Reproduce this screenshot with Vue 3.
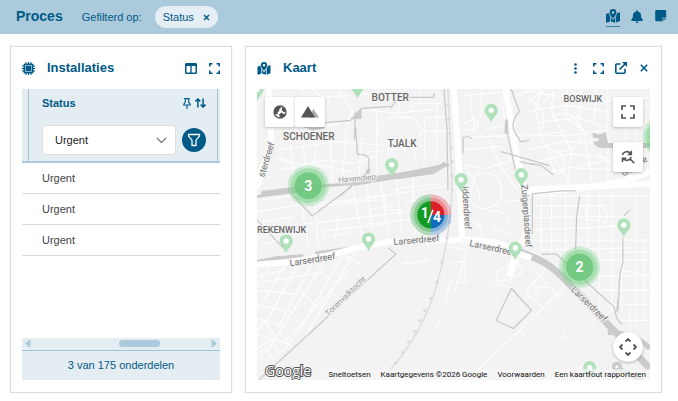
<script setup>
import { ref } from 'vue'

const status = ref('Urgent')
const rows = ['Urgent', 'Urgent', 'Urgent']

// Light residential streets
const streets = [
  // north-west
  'M272 130l18-4 22 4 26-6M278 150l60-8 48 4M276 158l26 8 24-6 26 4 24-8M280 170l40-4 30 6M290 145l4 38M302 146l6 30M316 145l-4 36M330 140l2 42M346 132l-4 46M362 138l-4 40M376 110v64M264 200l40-6M330 96l-8 28M338 92l14 20-6 14M300 90l6 8M312 90l10 8 26-2',
  'M352 92l20 4 16-2M360 108l30 6 44-4M376 128l14-10h22l10 12-8 14-22 2-12-8zM388 146v16M404 118l10-14h26M412 146l4 18M424 118h20M424 132h22M424 118v40M436 104v54M370 152l36-3M398 92v26M420 92v14',
  // centre
  'M464 96l36-3M470 100c-3 14 6 22 3 34M480 92v26M463 124q14-8 14 0t-14 6M484 130l18-4M500 98l4 24M462 138l48-2 52-3M462 150l38-3 10 14-26 8-20-4M488 140l12 28 16 22M466 170q14 20 12 30M474 176q22-8 26 10t-14 22-16-16zM466 218q18 8 14 18M488 212q18-4 20 14M504 202l18-2M490 228l18 6',
  // west
  'M257 212l48-8 50-4 90-14M262 222l30-5M300 194l8 54M314 192l4 56M306 224l52-6 76-10M318 206l60-6M324 237l26-4-2-6-26 4zM338 216l-4 22M352 186l10 54M366 184l6 46M380 182l8 54M396 178l5 56M412 174l2 60M370 196h14l2 14h16M392 190l22-4M364 210l30-4M366 224l42-4M330 230l60-6M404 188l34-4M404 202l30-3M262 245l24-8',
  'M257 276l28-6M262 282l60-10M270 266l-13 20M284 266l-20 34-7 8M298 264l-30 54-11 12M312 262l-34 66M326 259l-58 90-10 8M341 256l-38 68-18 24M354 252l-50 86M257 290l40 4M257 304l36 8M257 318l32 10M257 334l30 8M264 320l14 20 12 4-18 14-6-10-8 4M257 348l20-12M272 340l8 14M300 290l18 18M322 274l20 12M286 340l62-70M362 265l-18-10',
  // east
  'M528 92l34 6 16-4 24 8 46-4M540 90l-6 22 8 32 26 38M552 90l-2 22 20 40-4 30M566 90l-2 28 18 14 8 48M580 90l-3 34 14 20M594 90l-2 34M606 90v92M526 112l38-6 42 6M532 124l44-6 30 10M530 136l38 0 40-6M528 150l34-8 40 2M530 164l38-10 36 4M536 176l30-8 44 2M528 100q20 14 12 30M514 96l22-6M610 106h38M620 128h28M624 128v50M634 120v60M548 120q18-14 28 4t-8 26-24-8',
  'M520 96l14-10M524 105l18-14M532 112l20-18M548 158q10-10 14 2t-8 14zM590 150l22 16M580 166l30-6',
  'M532 196h116M534 206h72M534 218l90-2M534 230l84-4M532 240h116M540 250l88-2M560 260h88M582 276h66M590 290h58M540 192v58M550 192v64M564 192v72M586 192v84M598 192v110M610 192v120M620 240v70M634 192v136M642 240v80M596 206q16 6 6 18M570 206l14 0v14h14M618 270l30 6M612 252h36M610 304h38M620 320h28M628 304v30',
  'M446 246q16 6 24 0M452 262h12v20h-8M402 264l26-4M410 268v-8M450 280l-6 20M466 250l-12 40M494 272l22-10 6 10-24 10zM490 282l22 6M520 250l-12 34M474 372l88-84M532 300l10 8M532 296l8-10M516 330l10 6M528 284l22 4M536 278l-12 14 8 8M570 376q16-20 26-12M604 376l10-14M560 340l4-8M434 328l6-10M530 268l30 30M544 268l-8 12',
]

// Broad white through-roads
const avenues = [
  'M269 89L271 138Q270 152 264 164L257 188',
  'M453 89L458 168L461 238',
  'M504 89L516 158L521 185L526 214Q527 238 514 250',
  'M526 192Q606 190 648 172',
  'M257 264Q304 262 340 252T402 241T464 240T514 252L530 258',
  'M526 190L648 184M514 254L508 276',
]

// Grey footpaths, canals and outlines
const paths = [
  'M296 126L350 121L361 109L390 107M390 109L398 98H433V94M355 127L357 155Q371 154 368 164V170L364 176M354 140L355 112',
  'M443 90L446 130L447 190M462 154V138L468 137M468 138L471 139M510 90L518 112Q506 126 517 138L519 142L528 141M506 134L514 170M518 162L532 165M530 164L540 166L552 175',
  'M290 193L312 216L352 186M340 196L352 185M257 220L285 250M257 261L280 256M500 152L548 166M462 190L466 230M520 190L524 230',
  'M530 194L560 191H574M578 196L575 216L574 250M531 194V234M622 216L628 210M621 238V262L618 274L616 310M540 254L555 254L596 292M596 292L612 306L615 318L620 324M616 300L615 312M388 248L395 254L258 380',
  'M510 288L495 320L512 328L530 310L510 288',
]

const pins = [
  [391, 165], [490, 111], [460, 180], [520, 175], [286, 241], [368, 239],
  [514, 248], [622, 225], [357, 87], [588, 367], [257, 90],
]

const clusters = [
  { x: 308, y: 186, n: '3' },
  { x: 578, y: 267, n: '2' },
  { x: 661, y: 137, n: '' },
]

const railTicks = [
  [447, 106], [448, 120], [449, 134], [450, 148], [451, 162], [451, 176], [451, 190],
  [450, 206], [449, 222], [446, 238], [441, 262], [436, 282], [430, 298], [424, 310],
  [419, 320], [414, 331], [408, 341], [402, 352], [395, 362],
]
</script>

<template>
  <div class="page">
    <header class="topbar">
      <h1>Proces</h1>
      <span class="filter-label">Gefilterd op:</span>
      <span class="chip">
        Status
        <button type="button" aria-label="Filter verwijderen">
          <svg width="7" height="7" viewBox="0 0 7 7"><path d="M1 1l5 5M6 1l-5 5" stroke="currentColor" stroke-width="1.4" /></svg>
        </button>
      </span>
      <nav class="top-actions">
        <button type="button" class="active" aria-label="Kaart">
          <svg width="14" height="14" viewBox="0 0 14 14" fill="currentColor">
            <path d="M0 5.600Q0 5 .6 4.800L3 3.900Q3.300 6 4.200 7.200V12.400L.7 13.700Q0 13.900 0 13.200zM5 8.300L7 11 9 8.300V13.800L5 12.500zM9.800 7.200Q10.800 5.600 10.900 4.300L13.300 3.400Q14 3.200 14 3.900V11.600Q14 12.100 13.400 12.300L9.800 13.600z" />
            <path fill-rule="evenodd" d="M7 0a3.400 3.400 0 0 1 3.400 3.400C10.400 5.200 8.300 8 7 9.500 5.700 8 3.600 5.200 3.600 3.400A3.400 3.400 0 0 1 7 0zM7 2.200a1.300 1.300 0 1 0 0 2.600 1.300 1.300 0 0 0 0-2.600z" />
          </svg>
        </button>
        <button type="button" aria-label="Meldingen">
          <svg width="12" height="13" viewBox="0 0 12 13" fill="currentColor">
            <path d="M5.200 1a.8.8 0 0 1 1.600 0v.5C8.800 1.900 10 3.500 10 5.300c0 2.200.5 3 1.500 4.200.6.700.200 1.400-.5 1.400H1c-.7 0-1.100-.7-.5-1.400C1.500 8.300 2 7.500 2 5.300c0-1.800 1.200-3.400 3.200-3.800zM4.500 11.500h3a1.500 1.500 0 0 1-3 0z" />
          </svg>
        </button>
        <button type="button" aria-label="Notities">
          <svg width="12" height="12" viewBox="0 0 12 12">
            <path fill="currentColor" d="M1.500 0h8.500a1.200 1.200 0 0 1 1.200 1.200V7.500H8.300a.8.8 0 0 0-.8.8v3H1.500A1.300 1.300 0 0 1 .2 10V1.300A1.300 1.300 0 0 1 1.500 0zM8.300 11.100V8.300h2.800z" />
          </svg>
        </button>
      </nav>
    </header>

    <main class="panels">
      <section class="panel">
        <div class="panel-head">
          <svg class="lead" width="13" height="13" viewBox="0 0 13 13">
            <path d="M4 0v13M6.500 0v13M9 0v13M0 4h13M0 6.500h13M0 9h13" stroke="currentColor" stroke-width="1" />
            <rect x="1.500" y="1.500" width="10" height="10" rx="1.500" fill="currentColor" />
            <rect x="3.500" y="3.500" width="6" height="6" fill="none" stroke="#abcbdc" stroke-width=".8" />
          </svg>
          <h2>Installaties</h2>
          <div class="tools">
            <button type="button" aria-label="Kolommen">
              <svg width="12" height="11" viewBox="0 0 12 11"><path fill="currentColor" fill-rule="evenodd" d="M1.300 0h9.400A1.300 1.300 0 0 1 12 1.300v8.400A1.300 1.300 0 0 1 10.700 11H1.300A1.300 1.300 0 0 1 0 9.700V1.300A1.300 1.300 0 0 1 1.300 0zM1.500 3v6.500h3.800V3zM6.700 3v6.500h3.800V3z" /></svg>
            </button>
            <button type="button" aria-label="Volledig scherm">
              <svg width="11" height="11" viewBox="0 0 11 11"><path d="M.8 3.500V.8h2.700M7.500.8h2.700v2.700M10.200 7.500v2.700H7.500M3.500 10.200H.8V7.500" fill="none" stroke="currentColor" stroke-width="1.600" /></svg>
            </button>
          </div>
        </div>

        <div class="grid-area">
          <table>
            <thead>
              <tr>
                <th scope="col">
                  <div class="col-head">
                    <div class="col-title">
                      <span>Status</span>
                      <button type="button" aria-label="Kolom vastzetten">
                        <svg width="8" height="11" viewBox="0 0 8 11"><path d="M1.200.6h5.600M2.300.8v3.400L.8 6.200v.8h6.400v-.8L5.700 4.200V.8M4 7v4" fill="none" stroke="currentColor" stroke-width="1.100" /></svg>
                      </button>
                      <button type="button" aria-label="Sorteren">
                        <svg width="11" height="10" viewBox="0 0 11 10"><path d="M2.900 9.500V1M.5 3.400L2.900 1l2.400 2.400M8.100.5V9M5.700 6.600L8.100 9l2.400-2.400" fill="none" stroke="currentColor" stroke-width="1.500" /></svg>
                      </button>
                    </div>
                    <div class="col-filter">
                      <div class="select-box">
                        <select v-model="status" aria-label="Status filteren">
                          <option>Urgent</option>
                        </select>
                        <svg width="11" height="7" viewBox="0 0 11 7"><path d="M.8.8l4.700 4.700L10.200.8" fill="none" stroke="#6b6b6b" stroke-width="1.200" /></svg>
                      </div>
                      <button type="button" class="funnel" aria-label="Filter">
                        <svg width="14" height="14" viewBox="0 0 14 14"><path d="M1.500 1.500h11v1.600L9 7.200v5.300H5V7.200L1.500 3.100z" fill="none" stroke="#fff" stroke-width="1.300" /></svg>
                      </button>
                    </div>
                  </div>
                </th>
              </tr>
            </thead>
            <tbody>
              <tr v-for="(row, i) in rows" :key="i"><td>{{ row }}</td></tr>
            </tbody>
          </table>
        </div>
        <div class="scrollbar">
          <svg width="6" height="7" viewBox="0 0 6 7"><path d="M5.500 0v7H4L0 3.500 4 0z" fill="#abcbdc" /></svg>
          <span class="track"><span class="thumb"></span></span>
          <svg width="6" height="7" viewBox="0 0 6 7"><path d="M.5 0v7H2l4-3.500L2 0z" fill="#abcbdc" /></svg>
        </div>
        <div class="count">3 van 175 onderdelen</div>
      </section>

      <section class="panel">
        <div class="panel-head">
          <svg class="lead" width="14" height="13" viewBox="0 0 14 14" fill="currentColor">
            <path d="M0 5.600Q0 5 .6 4.800L3 3.900Q3.300 6 4.200 7.200V12.400L.7 13.700Q0 13.900 0 13.200zM5 8.300L7 11 9 8.300V13.800L5 12.500zM9.800 7.200Q10.800 5.600 10.900 4.300L13.300 3.400Q14 3.200 14 3.900V11.600Q14 12.100 13.400 12.300L9.800 13.600z" />
            <path fill-rule="evenodd" d="M7 0a3.400 3.400 0 0 1 3.400 3.400C10.400 5.200 8.300 8 7 9.500 5.700 8 3.600 5.200 3.600 3.400A3.400 3.400 0 0 1 7 0zM7 2.200a1.300 1.300 0 1 0 0 2.600 1.300 1.300 0 0 0 0-2.600z" />
          </svg>
          <h2>Kaart</h2>
          <div class="tools">
            <button type="button" aria-label="Meer">
              <svg width="3" height="11" viewBox="0 0 3 11" fill="currentColor"><circle cx="1.500" cy="1.500" r="1.300" /><circle cx="1.500" cy="5.500" r="1.300" /><circle cx="1.500" cy="9.500" r="1.300" /></svg>
            </button>
            <button type="button" aria-label="Volledig scherm">
              <svg width="11" height="11" viewBox="0 0 11 11"><path d="M.8 3.500V.8h2.700M7.500.8h2.700v2.700M10.200 7.500v2.700H7.500M3.500 10.200H.8V7.500" fill="none" stroke="currentColor" stroke-width="1.600" /></svg>
            </button>
            <button type="button" aria-label="Openen in nieuw venster">
              <svg width="12" height="12" viewBox="0 0 12 12"><path d="M5.500 2H1.800a1 1 0 0 0-1 1v7.200a1 1 0 0 0 1 1H9a1 1 0 0 0 1-1V6.800M4.500 7.500L10 2" fill="none" stroke="currentColor" stroke-width="1.600" /><path d="M7 0h5v5z" fill="currentColor" /></svg>
            </button>
            <button type="button" aria-label="Sluiten">
              <svg width="8" height="8" viewBox="0 0 8 8"><path d="M.8.8l6.400 6.400M7.200.8L.8 7.200" stroke="currentColor" stroke-width="1.600" /></svg>
            </button>
          </div>
        </div>

        <div class="map">
          <svg class="canvas" viewBox="257 89 391 291" preserveAspectRatio="xMidYMid slice">
            <rect x="257" y="89" width="391" height="292" fill="#f3f3f3" />
            <g fill="none" stroke="#fdfdfd" stroke-width="1.200"><path v-for="d in streets" :key="d" :d="d" /></g>

            <g fill="none" stroke="#cbcbcb">
              <path d="M257 197L300 188L350 184L448 165" stroke-width="3" />
              <path d="M264 194L304 189M354 183L396 176" stroke-width="6" stroke-linecap="round" />
              <path d="M396 177L432 172L445 164" stroke-width="5" />
              <path d="M257 262L290 257L303 256" stroke-width="4" />
              <path d="M315 253L350 248L358 246M388 244L392 243" stroke-width="3" />
              <path d="M514 250L534 258Q552 266 566 282L612 330L648 368" stroke-width="7" />
              <path d="M606 332Q632 332 648 348" stroke-width="5" />
              <path d="M600 146H648" stroke-width="5" />
              <path d="M614 366L648 384" stroke-width="4" />
            </g>
            <path d="M591 133l6 2 7-2 2 9v6h-10l-5-5 6-2v-2l-6-1zM352 120l9-12v11zM302 127l14 1 8-2v3l-12 2zM504 120l3 0v14h-4z" fill="#cbcbcb" />
            <circle cx="615" cy="366" r="5" fill="#cbcbcb" /><circle cx="615" cy="366" r="1.500" fill="#fff" />
            <path d="M366 170l4-1-1 5-5 2z" fill="#cbcbcb" />

            <g fill="none" stroke="#fff" stroke-width="6" stroke-linejoin="round"><path v-for="d in avenues" :key="d" :d="d" /></g>
            <circle cx="464" cy="241" r="4" fill="#fafafa" />
            <g fill="none" stroke="#c7c7c7" stroke-width="1.200" stroke-linejoin="round"><path v-for="d in paths" :key="d" :d="d" /></g>
            <path d="M447 89L451 185Q450 235 436 284T388 371" fill="none" stroke="#dcdcdc" stroke-width="1.400" />
            <circle v-for="([x, y], i) in railTicks" :key="'r' + i" :cx="x" :cy="y" r="1.600" fill="#dadada" />

            <g class="area">
              <text x="371" y="102">BOTTER</text>
              <text x="283" y="140">SCHOENER</text>
              <text x="387" y="147">TJALK</text>
              <text class="small" x="562" y="103">BOSWIJK</text>
              <text class="small" x="257" y="233">REKENWIJK</text>
            </g>
            <g class="road">
              <text transform="translate(264 178) rotate(-73)">sterdreef</text>
              <text class="faint" transform="translate(338 183) rotate(-5)">Havendiep</text>
              <text transform="translate(290 266) rotate(-9)">Larserdreef</text>
              <text transform="translate(393 245) rotate(-5)">Larserdreef</text>
              <text transform="translate(468 246) rotate(12)">Larserdreef</text>
              <text transform="translate(461 187) rotate(86)">iddendreef</text>
              <text transform="translate(520 185) rotate(86)">Zuigerplasdreef</text>
              <text transform="translate(569 290) rotate(44)">Larserdreef</text>
              <text transform="translate(622 177) rotate(-32)">Ge</text>
              <text transform="translate(638 166) rotate(-32)">se</text>
              <text class="faint" transform="translate(328 316) rotate(-44)">Torenvalktocht</text>
            </g>

            <g v-for="([x, y], i) in pins" :key="'p' + i" :transform="`translate(${x} ${y})`">
              <path d="M0 12.500C-1 8-6.600 4.500-6.600 0A6.600 6.600 0 0 1 6.600 0C6.600 4.500 1 8 0 12.500z" fill="#afe2ba" />
              <circle r="2.700" fill="#fff" />
            </g>

            <g v-for="(c, i) in clusters" :key="'c' + i" :transform="`translate(${c.x} ${c.y})`">
              <circle r="20.500" fill="#6fcf80" fill-opacity=".3" />
              <circle r="17.500" fill="#6fcf80" fill-opacity=".4" />
              <circle r="13.500" fill="#6bc67b" fill-opacity=".85" />
              <text v-if="c.n" class="num" text-anchor="middle" y="5">{{ c.n }}</text>
            </g>

            <g transform="translate(430 215)">
              <g fill-opacity=".28">
                <path d="M0-20.500A20.500 20.500 0 0 0 0 20.500z" fill="#109c22" />
                <path d="M0-17A17 17 0 0 0 0 17z" fill="#109c22" />
                <path d="M0-20.500A20.500 20.500 0 0 1 20.500 0H0z" fill="#e0202a" />
                <path d="M0-17A17 17 0 0 1 17 0H0z" fill="#e0202a" />
                <path d="M20.500 0A20.500 20.500 0 0 1 0 20.500V0z" fill="#0f6dbd" />
                <path d="M17 0A17 17 0 0 1 0 17V0z" fill="#0f6dbd" />
              </g>
              <path d="M0-13.500A13.500 13.500 0 0 0 0 13.500z" fill="#109c22" />
              <path d="M0-13.500A13.500 13.500 0 0 1 13.500 0H0z" fill="#dc1f26" />
              <path d="M13.500 0A13.500 13.500 0 0 1 0 13.500V0z" fill="#0f6dbd" />
              <text class="num" x="-10" y="3">1</text>
              <path d="M-3 8L2-5" stroke="#fff" stroke-width="1.500" />
              <text class="num" x="2" y="7">4</text>
            </g>
            <text class="google" x="265" y="375">Google</text>
          </svg>

          <div class="map-types">
            <button type="button" aria-label="Satelliet">
              <svg width="14" height="14" viewBox="0 0 14 14"><circle cx="7" cy="7" r="6" fill="#fff" stroke="#555" stroke-width="1.300" /><path d="M1 8Q.8 4 4 1.800L7.500 1.300 8 3 6 4.500 6.500 6 4.500 7 5 9 3 9.500zM9.500 2l2.500 2 .8 3-2 .2L8.500 5zM6 9.500L8.500 7.500l2 1.500 2-.5-1.500 3L8.500 12.500 6.500 11.500z" fill="#555" /></svg>
            </button>
            <button type="button" aria-label="Terrein">
              <svg width="18" height="12" viewBox="0 0 18 12"><path d="M8 11.500l4.500-8.500L18 11.500z" fill="#aaa" /><path d="M0 11.500L7 0l7 11.500z" fill="#555" /></svg>
            </button>
          </div>
          <div class="map-side">
            <button type="button" aria-label="Kaart op volledig scherm">
              <svg width="14" height="14" viewBox="0 0 14 14"><path d="M1 5V1h4M9 1h4v4M13 9v4H9M5 13H1V9" fill="none" stroke="#555" stroke-width="1.700" /></svg>
            </button>
            <button type="button" aria-label="Opnieuw zoeken">
              <svg width="14" height="14" viewBox="0 0 14 14" fill="none" stroke="#555" stroke-width="1.600"><path d="M1.500 5A4.500 4.500 0 0 1 9.700 3.800M10.300.8v3.700H6.700M10.200 7A4.500 4.500 0 0 1 2.300 8.600M1.500 12V8.300h3.700M9 8.800l4.300 4.400" /></svg>
            </button>
          </div>
          <button type="button" class="pan" aria-label="Kaart verschuiven">
            <svg width="18" height="18" viewBox="0 0 18 18"><path d="M6.500 3.500L9 1l2.500 2.500M14.500 6.500L17 9l-2.500 2.500M11.500 14.500L9 17l-2.500-2.500M3.500 11.500L1 9l2.500-2.500" fill="none" stroke="#555" stroke-width="1.800" /></svg>
          </button>
          <div class="credits">
            <a href="#">Sneltoetsen</a>
            <span>Kaartgegevens ©2026 Google</span>
            <a href="#">Voorwaarden</a>
            <a href="#">Een kaartfout rapporteren</a>
          </div>
        </div>
      </section>
    </main>
  </div>
</template>

<style>
body { margin: 0; background: #fff; }
</style>

<style scoped>
* { box-sizing: border-box; }
.page {
  min-height: 100vh;
  display: flex;
  flex-direction: column;
  font: 11px/16px "Liberation Sans", Arial, sans-serif;
  color: #005a87;
}
button {
  display: flex;
  align-items: center;
  justify-content: center;
  padding: 0;
  border: 0;
  background: none;
  color: inherit;
  font: inherit;
  cursor: pointer;
}
svg { display: block; flex: none; }
.topbar {
  display: flex;
  align-items: center;
  height: 34px;
  padding: 0 10px 2px 16px;
  background: #abcadb;
}
h1 { margin: 0 19px 0 0; font-size: 14px; line-height: 20px; }
.filter-label { margin-right: 13px; padding-top: 2px; }
.chip {
  display: flex;
  align-items: center;
  gap: 9px;
  height: 22px;
  margin-top: 2px;
  padding: 0 8px;
  border-radius: 11px;
  background: #e4eef4;
}
.top-actions { display: flex; gap: 10px; margin-left: auto; }
.top-actions button {
  width: 14px;
  height: 20px;
  margin-top: 2px;
  padding-bottom: 1px;
  border-bottom: 1px solid transparent;
}
.top-actions .active { border-color: #3a7fa3; }
.panels {
  flex: 1;
  display: grid;
  grid-template-columns: minmax(0, 222fr) minmax(0, 417fr);
  gap: 13px;
  padding: 12px 16px 8px 10px;
}
.panel {
  display: flex;
  flex-direction: column;
  padding: 0 11px 12px;
  border: 1px solid #dedede;
  box-shadow: 0 0 1px #ddd;
}
.panel-head { display: flex; align-items: center; height: 42px; }
.lead { margin-right: 12px; }
h2 { margin: 0; font-size: 13px; line-height: 18px; }
.tools { display: flex; align-items: center; gap: 11px; margin-left: auto; }
.tools button { width: 12px; }
.grid-area { flex: 1; }
table { width: 100%; border-collapse: collapse; }
th {
  padding: 0 2px 0 6px;
  background: #e4edf2;
  border-bottom: 2px solid #abcadb;
  text-align: left;
}
.col-head {
  height: 72px;
  padding: 6px 11px 0 13px;
  border-left: 1px solid #a3c4d6;
  border-right: 1px solid #a3c4d6;
}
.col-title { display: flex; align-items: center; gap: 4px; margin-bottom: 14px; }
.col-title span { flex: 1; }
.col-filter { display: flex; align-items: center; gap: 6px; }
.select-box { position: relative; flex: 1; min-width: 0; }
.select-box svg { position: absolute; right: 9px; top: 12px; pointer-events: none; }
select {
  display: block;
  width: 100%;
  height: 30px;
  padding: 0 24px 0 12px;
  appearance: none;
  border: 1px solid #ddd;
  border-radius: 2px;
  background: #fff;
  color: #222;
  font: inherit;
  font-weight: 400;
}
.funnel { width: 24px; height: 24px; border-radius: 50%; background: #005a87; }
td { height: 31px; padding: 0 20px; border-bottom: 1px solid #d9d9d9; color: #444; }
.scrollbar {
  display: flex;
  align-items: center;
  height: 13px;
  padding: 0 3px 1px;
  background: #e4edf2;
  border-bottom: 1px solid #9fc3d6;
}
.track { flex: 1; height: 7px; padding-left: 46%; }
.thumb { display: block; width: 41px; height: 7px; border-radius: 4px; background: #abcadb; }
.count { height: 29px; line-height: 29px; text-align: center; background: #e4edf2; }
.map { position: relative; flex: 1; min-height: 240px; overflow: hidden; background: #f3f3f3; }
.canvas { position: absolute; inset: 0; width: 100%; height: 100%; font-family: Roboto, sans-serif; }
.area text { font-size: 10px; font-weight: 500; fill: #686868; stroke: #f5f5f5; stroke-width: 2px; paint-order: stroke; }
.area .small { font-size: 9px; }
.road text { font-size: 9px; fill: #707070; stroke: #f5f5f5; stroke-width: 2px; paint-order: stroke; }
.road .faint { font-size: 8px; fill: #999; }
.num { font-size: 14px; font-weight: 700; fill: #fff; }
.google { font: 500 14px "Open Sans", sans-serif; fill: #fff; stroke: #555; stroke-width: 2px; paint-order: stroke; }
.map-types { position: absolute; left: 8px; top: 8px; display: flex; }
.map-side { position: absolute; right: 7px; top: 8px; display: grid; gap: 15px; }
.map-types button, .map-side button {
  width: 30px;
  height: 30px;
  border-radius: 2px;
  background: #fff;
  box-shadow: 0 1px 3px rgba(0, 0, 0, 0.25);
}
.pan {
  position: absolute;
  right: 7px;
  bottom: 18px;
  width: 30px;
  height: 30px;
  border-radius: 50%;
  background: #fff;
  box-shadow: 0 1px 3px rgba(0, 0, 0, 0.25);
}
.credits {
  position: absolute;
  right: 0;
  bottom: 0;
  display: flex;
  gap: 10px;
  padding: 0 4px 0 5px;
  background: rgba(245, 245, 245, 0.7);
  font: 8px/11px Roboto, sans-serif;
  white-space: nowrap;
}
.credits a, .credits span { color: #111; text-decoration: none; }
</style>
